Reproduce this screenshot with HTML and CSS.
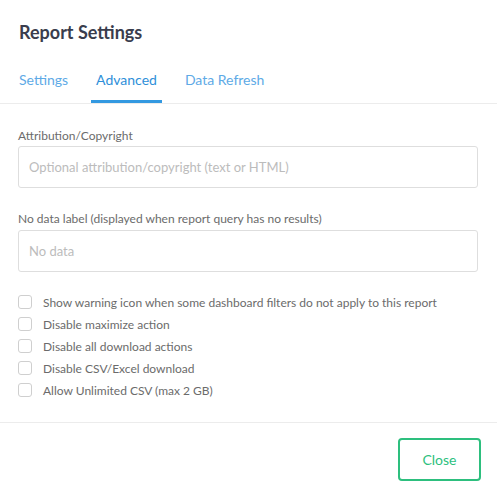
FILE: index.html
```html
<!DOCTYPE html>
<html>
<head>
	<link rel="stylesheet" href="styles.css">
</head>
<body>
	<div class="dialog">
		<div class="head">
			<h4 class="title">Report Settings</h4>
			<div class="tabs">
				<span class="tab">Settings</span>
				<span class="tab active">Advanced</span>
				<span class="tab">Data Refresh</span>
			</div>
		</div>
		<div class="content">
			<label class="label">Attribution/Copyright</label>
			<input class="field" type="text" placeholder="Optional attribution/copyright (text or HTML)">
			<label class="label second">No data label (displayed when report query has no results)</label>
			<input class="field" type="text" placeholder="No data">
			<div class="checks">
				<div class="check"><span class="box"></span>Show warning icon when some dashboard filters do not apply to this report</div>
				<div class="check"><span class="box"></span>Disable maximize action</div>
				<div class="check"><span class="box"></span>Disable all download actions</div>
				<div class="check"><span class="box"></span>Disable CSV/Excel download</div>
				<div class="check"><span class="box"></span>Allow Unlimited CSV (max 2 GB)</div>
			</div>
		</div>
		<div class="foot">
			<button class="close">Close</button>
		</div>
	</div>
</body>
</html>
```
FILE: styles.css
```css
body{
	margin: 0;
	background: #fff;
	font-family: Lato, "Open Sans", sans-serif;
}
.dialog{
	width: 497px;
}
.head{
	padding: 20px 0 0;
	border-bottom: 1px solid #ececec;
}
.title{
	margin: 0 0 0 19px;
	font-size: 18px;
	line-height: 24px;
	font-weight: 700;
	color: #3a3d4d;
}
.tabs{
	display: flex;
	gap: 18px;
	margin: 16px 0 0 14px;
}
.tab{
	padding: 10px 5px 10px;
	font-size: 14px;
	line-height: 20px;
	color: #5eaae6;
	border-bottom: 3px solid transparent;
}
.tab.active{
	color: #2e8fd9;
	border-bottom-color: #3399e1;
}
.content{
	padding: 24px 19px 21px 18px;
	display: flex;
	flex-direction: column;
}
.label{
	font-size: 12px;
	line-height: 16px;
	color: #6b6b6b;
	margin-bottom: 2px;
}
.label.second{
	margin-top: 23px;
	margin-bottom: 3px;
}
.field{
	box-sizing: border-box;
	height: 42px;
	border: 1px solid #dedede;
	border-radius: 3px;
	padding: 0 10px;
	font-family: Lato, "Open Sans", sans-serif;
	font-size: 13px;
	color: #333;
	outline: none;
}
.field::placeholder{
	color: #bcbcbc;
}
.checks{
	margin-top: 19px;
}
.check{
	display: flex;
	align-items: center;
	height: 22px;
	font-size: 12px;
	color: #6b6b6b;
}
.box{
	box-sizing: border-box;
	width: 14px;
	height: 14px;
	border: 1px solid #cfcfcf;
	border-radius: 3px;
	margin-right: 11px;
	margin-top: -1px;
}
.foot{
	border-top: 1px solid #ececec;
	padding: 15px 16px 0;
	display: flex;
	justify-content: flex-end;
}
.close{
	width: 83px;
	height: 43px;
	background: #fff;
	border: 2px solid #2dbf7e;
	border-radius: 4px;
	color: #2dbf7e;
	font-family: Lato, "Open Sans", sans-serif;
	font-size: 14px;
}
```
